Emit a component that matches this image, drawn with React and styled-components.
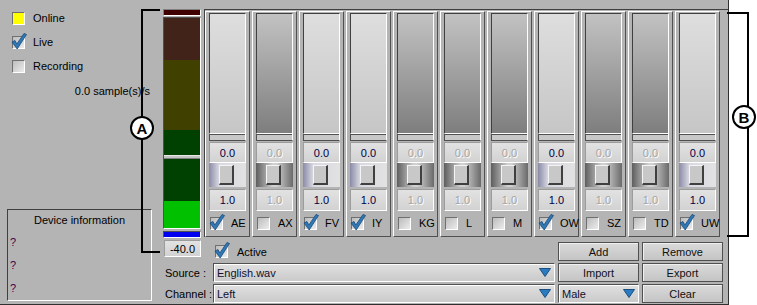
import React from 'react';
import styled, { createGlobalStyle } from 'styled-components';

const GlobalStyle = createGlobalStyle`
  html, body { margin: 0; padding: 0; background: #fff; }
  body {
    font-family: "Liberation Sans", Arial, sans-serif;
    font-size: 11px;
    color: #000;
  }
  * { box-sizing: border-box; }
`;

const channels = [
  { name: 'AE', active: true },
  { name: 'AX', active: false },
  { name: 'FV', active: true },
  { name: 'IY', active: true },
  { name: 'KG', active: false },
  { name: 'L', active: false },
  { name: 'M', active: false },
  { name: 'OW', active: true },
  { name: 'SZ', active: false },
  { name: 'TD', active: false },
  { name: 'UW', active: true }
];

function Tick() {
  return (
    <TickSvg viewBox="0 0 16 16" width="16" height="16">
      <polygon
        points="1,9 4,7.5 5.8,11 13,0.5 15.5,1.5 6.2,16"
        fill="#2f78b6"
        stroke="#1b4a78"
        strokeWidth="0.8"
        strokeLinejoin="round"
      />
    </TickSvg>
  );
}

function Check({ checked }) {
  return <CheckBox>{checked && <Tick />}</CheckBox>;
}

function Arrow() {
  return (
    <svg width="12" height="9" viewBox="0 0 12 9">
      <polygon points="0.5,0.5 11.5,0.5 6,8.5" fill="#2a7bbf" stroke="#1a4f80" strokeWidth="1" />
    </svg>
  );
}

function Channel({ name, active }) {
  return (
    <Column>
      <FaderTrack $active={active} />
      <FaderFoot />
      <ValueBox $active={active}>0.0</ValueBox>
      <Slider $active={active}>
        <Thumb />
      </Slider>
      <ValueBox $active={active} $low>1.0</ValueBox>
      <CheckRow>
        <Check checked={active} />
        <span>{name}</span>
      </CheckRow>
    </Column>
  );
}

export default function App() {
  return (
    <Screen>
      <GlobalStyle />
      <Panel>
        <Side>
          <StatusList>
            <StatusItem>
              <Lamp />
              Online
            </StatusItem>
            <StatusItem>
              <Check checked />
              Live
            </StatusItem>
            <StatusItem>
              <Check />
              Recording
            </StatusItem>
          </StatusList>
          <Rate>0.0 sample(s)/s</Rate>
          <DeviceBox>
            <DeviceTitle>Device information</DeviceTitle>
            <Unknown>?</Unknown>
            <Unknown>?</Unknown>
            <Unknown>?</Unknown>
          </DeviceBox>
        </Side>

        <Main>
          <Upper>
            <Meter>
              <PeakBar />
              <MeterBody>
                <Band $h={42} $c="#41231a" />
                <Band $h={70} $c="#404000" />
                <Band $h={25} $c="#004000" />
                <Marker />
                <Band $h={42} $c="#004000" />
                <Band $h={27} $c="#00c000" />
              </MeterBody>
              <FloorBar />
            </Meter>
            <Channels>
              {channels.map((c) => (
                <Channel key={c.name} {...c} />
              ))}
            </Channels>
          </Upper>

          <Controls>
            <LevelBox>-40.0</LevelBox>
            <ActiveRow>
              <Check checked />
              Active
            </ActiveRow>
            <Button>Add</Button>
            <Button>Remove</Button>

            <FieldLabel>Source :</FieldLabel>
            <Select>
              <span>English.wav</span>
              <Arrow />
            </Select>
            <Button>Import</Button>
            <Button>Export</Button>

            <FieldLabel>Channel :</FieldLabel>
            <Select>
              <span>Left</span>
              <Arrow />
            </Select>
            <Select>
              <span>Male</span>
              <Arrow />
            </Select>
            <Button>Clear</Button>
          </Controls>
        </Main>

        <BracketA>
          <Badge $left={-13} $top={105}>A</Badge>
        </BracketA>
      </Panel>

      <BracketB>
        <Badge $left={5} $top={91}>B</Badge>
      </BracketB>
    </Screen>
  );
}

const Screen = styled.div`
  position: relative;
  width: 757px;
  height: 305px;
  display: flex;
  background: #fff;
`;

const Panel = styled.div`
  position: relative;
  width: 729px;
  height: 305px;
  display: flex;
  background: #b4b4b4;
  border-right: 1px solid #303030;
  border-bottom: 1px solid #303030;
`;

const Side = styled.div`
  width: 163px;
  display: flex;
  flex-direction: column;
  padding: 0 0 3px 7px;
`;

const StatusList = styled.div`
  display: flex;
  flex-direction: column;
  gap: 12px;
  padding: 12px 0 0 5px;
`;

const StatusItem = styled.div`
  height: 12px;
  display: flex;
  align-items: center;
  gap: 8px;
  & > div { flex: none; }
`;

const Lamp = styled.div`
  width: 13px;
  height: 13px;
  background: #ffff00;
  border-top: 1px solid #707070;
  border-left: 1px solid #707070;
  border-right: 1px solid #fff;
  border-bottom: 1px solid #fff;
`;

const Rate = styled.div`
  margin-top: 12px;
  line-height: 14px;
  text-align: right;
  padding-right: 13px;
`;

const DeviceBox = styled.div`
  margin-top: auto;
  width: 145px;
  height: 92px;
  border-top: 1px solid #404040;
  border-left: 1px solid #404040;
  border-right: 1px solid #fff;
  border-bottom: 1px solid #fff;
  display: flex;
  flex-direction: column;
`;

const DeviceTitle = styled.div`
  line-height: 21px;
  text-align: center;
`;

const Unknown = styled.div`
  line-height: 23px;
  padding-left: 2px;
  color: #40004a;
`;

const Main = styled.div`
  flex: 1;
  display: flex;
  flex-direction: column;
  padding-top: 9px;
`;

const Upper = styled.div`
  height: 229px;
  display: flex;
`;

const Meter = styled.div`
  width: 38px;
  display: flex;
  flex-direction: column;
`;

const PeakBar = styled.div`
  height: 8px;
  background: #400000;
  border-top: 1px solid #808080;
  border-left: 1px solid #808080;
  border-right: 1px solid #fff;
  border-bottom: 1px solid #fff;
`;

const MeterBody = styled.div`
  margin-top: 1px;
  display: flex;
  flex-direction: column;
  border-top: 1px solid #505050;
  border-left: 1px solid #505050;
  border-right: 1px solid #fff;
  border-bottom: 1px solid #fff;
`;

const Band = styled.div`
  height: ${(p) => p.$h}px;
  background: ${(p) => p.$c};
`;

const Marker = styled.div`
  height: 4px;
  background: #c4c4c4;
  border-top: 1px solid #e8e8e8;
  border-bottom: 1px solid #808080;
`;

const FloorBar = styled.div`
  margin-top: 2px;
  height: 7px;
  background: #0000f0;
  border-top: 1px solid #505050;
  border-left: 1px solid #505050;
  border-right: 1px solid #fff;
  border-bottom: 1px solid #fff;
`;

const Channels = styled.div`
  flex: 1;
  margin-left: 3px;
  height: 228px;
  display: flex;
  gap: 2px;
  padding-top: 1px;
  border-top: 1px solid #404040;
  border-left: 1px solid #404040;
`;

const Column = styled.div`
  width: 45px;
  height: 226px;
  display: flex;
  flex-direction: column;
  padding: 1px 3px 0 3px;
  border-top: 1px solid #fff;
  border-left: 1px solid #fff;
  border-right: 1px solid #505050;
  border-bottom: 1px solid #505050;
`;

const FaderTrack = styled.div`
  height: 120px;
  border-top: 1px solid #404040;
  border-left: 1px solid #404040;
  border-right: 1px solid #fff;
  background: ${(p) =>
    p.$active
      ? 'linear-gradient(#dedede, #c6c6c6)'
      : 'linear-gradient(#c2c2c2, #7e7e7e)'};
`;

const FaderFoot = styled.div`
  height: 8px;
  margin-bottom: 1px;
  background: #c8c8c8;
  border-top: 1px solid #fff;
  border-left: 1px solid #505050;
  border-right: 1px solid #fff;
  border-bottom: 1px solid #505050;
  box-shadow: inset 0 1px 0 #505050;
`;

const ValueBox = styled.div`
  height: ${(p) => (p.$low ? 22 : 21)}px;
  margin-top: ${(p) => (p.$low ? 2 : 0)}px;
  display: flex;
  align-items: center;
  justify-content: center;
  background: linear-gradient(#e2e2e2, #d2d2d2);
  border-top: 1px solid #9c9c9c;
  border-left: 1px solid #9c9c9c;
  border-right: 1px solid #fff;
  border-bottom: 1px solid #fff;
  color: ${(p) => (p.$active ? '#000048' : '#a4a4a4')};
  text-shadow: ${(p) => (p.$active ? 'none' : '1px 1px 0 #fff')};
`;

const Slider = styled.div`
  height: 24px;
  display: flex;
  align-items: center;
  padding-left: 10px;
  background: ${(p) =>
    p.$active
      ? 'linear-gradient(to right, #8a8aa8, #d8d8e2 10px, #e2e2e2)'
      : 'linear-gradient(to right, #5e5e5e, #d0d0d0 45%, #d0d0d0 55%, #6a6a6a)'};
`;

const Thumb = styled.div`
  width: 15px;
  height: 20px;
  background: #c8c8c8;
  border-top: 1px solid #f4f4f4;
  border-left: 1px solid #f4f4f4;
  border-right: 2px solid #404040;
  border-bottom: 2px solid #404040;
`;

const CheckRow = styled.div`
  flex: 1;
  display: flex;
  align-items: center;
  gap: 8px;
  padding-left: 1px;
  padding-bottom: 1px;
`;

const CheckBox = styled.div`
  position: relative;
  flex: none;
  width: 13px;
  height: 13px;
  background: linear-gradient(135deg, #bcbcbc, #ececec);
  border-top: 1px solid #707070;
  border-left: 1px solid #707070;
  border-right: 1px solid #fff;
  border-bottom: 1px solid #fff;
`;

const TickSvg = styled.svg`
  position: absolute;
  left: -2px;
  top: -4px;
  overflow: visible;
`;

const Controls = styled.div`
  margin-top: 4px;
  display: grid;
  grid-template-columns: 47px 342px 81px 81px;
  grid-template-rows: 19px 19px 19px;
  column-gap: 3px;
  row-gap: 2px;
`;

const LevelBox = styled.div`
  justify-self: start;
  align-self: start;
  margin: -2px 0 0 1px;
  width: 37px;
  height: 17px;
  display: flex;
  align-items: center;
  justify-content: center;
  background: linear-gradient(#e2e2e2, #d2d2d2);
  border-top: 1px solid #9c9c9c;
  border-left: 1px solid #9c9c9c;
  border-right: 1px solid #fff;
  border-bottom: 1px solid #fff;
`;

const ActiveRow = styled.div`
  display: flex;
  align-items: center;
  gap: 9px;
  padding-left: 2px;
`;

const FieldLabel = styled.div`
  display: flex;
  align-items: center;
  padding-left: 2px;
  white-space: nowrap;
`;

const Select = styled.div`
  display: flex;
  align-items: center;
  justify-content: space-between;
  padding: 0 3px 0 3px;
  background: linear-gradient(#e0e0e0, #cacaca);
  border-top: 1px solid #505050;
  border-left: 1px solid #505050;
  border-right: 1px solid #fff;
  border-bottom: 1px solid #fff;
  box-shadow: inset 1px 1px 0 #fff;
  color: #101030;
  svg { flex: none; }
`;

const Button = styled.div`
  display: flex;
  align-items: center;
  justify-content: center;
  background: linear-gradient(#dadada, #c4c4c4);
  border: 1px solid #505050;
  box-shadow: inset 1px 1px 0 #f0f0f0;
  color: #101010;
`;

const BracketA = styled.div`
  position: absolute;
  left: 141px;
  top: 9px;
  width: 19px;
  height: 244px;
  border: 2px solid #000;
  border-right: none;
`;

const BracketB = styled.div`
  position: absolute;
  left: 727px;
  top: 12px;
  width: 22px;
  height: 225px;
  border: 2px solid #000;
  border-left: none;
`;

const Badge = styled.div`
  position: absolute;
  left: ${(p) => p.$left}px;
  top: ${(p) => p.$top}px;
  width: 24px;
  height: 24px;
  border-radius: 50%;
  border: 2px solid #000;
  background: #fff;
  display: flex;
  align-items: center;
  justify-content: center;
  font-weight: bold;
  font-size: 15px;
  line-height: 1;
`;
